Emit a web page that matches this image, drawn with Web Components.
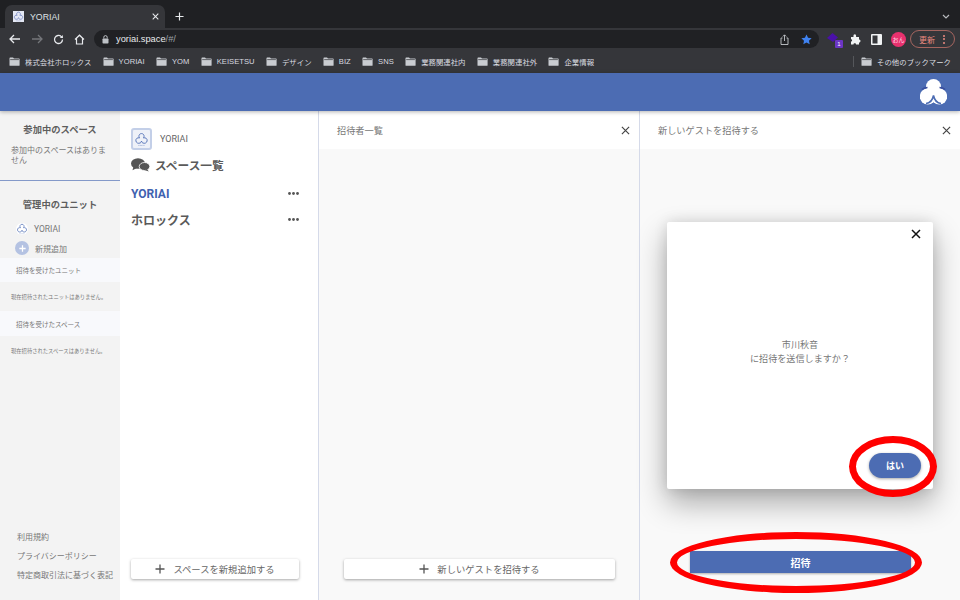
<!DOCTYPE html>
<html lang="ja"><head><meta charset="utf-8"><title>YORIAI</title>
<style>
html,body{margin:0;padding:0;width:960px;height:600px;overflow:hidden;background:#fff;font-family:"Noto Sans CJK JP","Noto Sans",sans-serif}
app-shell{display:flex;flex-direction:column;width:960px;height:600px;position:relative;overflow:hidden}
</style></head><body>
<app-shell>
  <tab-strip></tab-strip>
  <tool-bar></tool-bar>
  <book-marks></book-marks>
  <app-header></app-header>
  <main-area>
    <side-bar></side-bar>
    <space-list></space-list>
    <guest-panel title-text="招待者一覧" width="321" action="新しいゲストを招待する"></guest-panel>
    <invite-panel></invite-panel>
  </main-area>
  <red-ring style="left:849px;top:436px;width:88px;height:61px"></red-ring>
  <red-ring style="left:670px;top:532px;width:252px;height:61px"></red-ring>
</app-shell>
<script>
const sans='"Liberation Sans","Noto Sans CJK JP",sans-serif';
const ui='Roboto,"Noto Sans CJK JP",sans-serif';
const def=(name,html)=>{
  customElements.define(name,class extends HTMLElement{
    constructor(){super();this.attachShadow({mode:'open'});}
    connectedCallback(){this.shadowRoot.innerHTML=typeof html==='function'?html(this):html;}
  });
};
const mark=(s,c='#4c6cb3')=>`<svg width="${s}" height="${s}" viewBox="0 0 24 24" fill="none" stroke="${c}" stroke-width="1.4"><path d="M9 9.5C6.5 6.500 8.500 2.500 12 2.500s5.500 4 3 7c3.500-1.200 6.500 1.300 6 4.700-.5 3.300-4 4.800-7 3.300-1-.5-1.600-1.500-2-3-.4 1.500-1 2.500-2 3-3 1.500-6.500 0-7-3.300C2.500 10.800 5.500 8.300 9 9.500z"/><path d="M7 21.500h10" stroke-width="1" stroke-dasharray="1.500 .8" opacity=".7"/></svg>`;
const x=(s,c,w=1.4)=>`<svg width="${s}" height="${s}" viewBox="0 0 10 10" stroke="${c}" stroke-width="${w}" fill="none"><path d="M1 1l8 8M9 1l-8 8"/></svg>`;
const plus=(s,c,w=1.4)=>`<svg width="${s}" height="${s}" viewBox="0 0 10 10" stroke="${c}" stroke-width="${w}" fill="none"><path d="M5 .5v9M.5 5h9"/></svg>`;

def('tab-strip',`<style>
:host{display:flex;height:28px;flex:none;background:#1f2023;padding:5px 0 0 5px;box-sizing:border-box;align-items:flex-start;font-family:${sans};color:#dfe1e5}
.tab{width:160px;height:23px;background:#35363a;border-radius:7px 7px 0 0;display:flex;align-items:center;padding:0 6px 0 8px;box-sizing:border-box;font-size:8.8px;gap:6px}
.fav{width:11px;height:11px;background:#e4e8f4;display:flex;align-items:center;justify-content:center}
.t{flex:1}
.p{margin:7px 0 0 10px;display:flex}
.c{margin:9px 10px 0 auto;display:flex}
</style><div class="tab"><span class="fav">${mark(11,'#5a6fb5')}</span><span class="t">YORIAI</span>${x(7,'#e8eaed',1.5)}</div>
<span class="p">${plus(9,'#e8eaed',1.3)}</span>
<span class="c"><svg width="8" height="5" viewBox="0 0 8 5" fill="none" stroke="#b8babe" stroke-width="1.2"><path d="M1 1l3 3 3-3"/></svg></span>`);

def('tool-bar',`<style>
:host{display:flex;height:22px;flex:none;background:#35363a;align-items:center;font-family:${sans};color:#e8eaed;box-sizing:border-box}
.nav{display:flex;width:94px;flex:none;position:relative;height:22px}
.nav svg{position:absolute;top:6px}
.omni{width:725px;height:18px;flex:none;background:#202124;border-radius:9px;display:flex;align-items:center;box-sizing:border-box;padding:0 7px 0 8px;font-size:9.3px}
.omni b{font-weight:400;color:#9aa0a6}
.lock{margin-right:7px;display:flex}
.sp{flex:1}
.ext{position:relative;width:15px;height:14px;margin-left:8px;flex:none}
.ext i{position:absolute;left:8px;top:8px;width:8px;height:8px;background:#6b35c4;color:#fff;font:normal 6px/8px ${sans};text-align:center;border-radius:1px}
.pz{margin-left:8px;display:flex}
.pn{margin-left:10px;display:flex}
.av{width:15px;height:15px;border-radius:50%;background:#e8316e;color:#ffd9e5;font-size:6px;display:flex;align-items:center;justify-content:center;margin-left:9px;font-family:"Noto Sans CJK JP"}
.up{margin-left:4px;width:45px;height:18px;border:1px solid #a5655f;border-radius:9px;box-sizing:border-box;color:#ec8b80;font-size:8px;display:flex;align-items:center;padding-left:8px;font-family:"Noto Sans CJK JP";gap:8px}
.dots{display:flex;flex-direction:column;gap:1.5px}
.dots u{display:block;width:2px;height:2px;border-radius:50%;background:#ec8b80}
</style>
<div class="nav">
<svg style="left:9px" width="12" height="10" viewBox="0 0 12 10" fill="none" stroke="#e8eaed" stroke-width="1.3"><path d="M11 5H1.500M5 1L1 5l4 4"/></svg>
<svg style="left:31px" width="12" height="10" viewBox="0 0 12 10" fill="none" stroke="#74767a" stroke-width="1.3"><path d="M1 5h9.500M7 1l4 4-4 4"/></svg>
<svg style="left:53px;top:5.5px" width="11" height="11" viewBox="0 0 11 11" fill="none" stroke="#e8eaed" stroke-width="1.3"><path d="M9.500 5.500a4 4 0 1 1-1.200-2.900L9.500 3.800"/><path d="M9.800 1v3H6.800" fill="#e8eaed" stroke="none"/></svg>
<svg style="left:74px;top:5.5px" width="11" height="11" viewBox="0 0 11 11" fill="none" stroke="#e8eaed" stroke-width="1.2"><path d="M1 5.500L5.500 1.200 10 5.500M2.500 4.500V10h6V4.500"/></svg>
</div>
<div class="omni"><span class="lock"><svg width="7" height="9" viewBox="0 0 7 9" fill="#bdc1c6"><rect x=".5" y="3.500" width="6" height="5" rx=".8"/><path d="M1.800 3.500V2.300a1.700 1.700 0 0 1 3.400 0V3.500" fill="none" stroke="#bdc1c6"/></svg></span><span>yoriai.space<b>/#/</b></span><span class="sp"></span>
<svg width="9" height="11" viewBox="0 0 9 11" fill="none" stroke="#c4c7cc" stroke-width=".9" style="margin-right:12px"><path d="M2.500 4H1v6.500h7V4H6.500M4.500 7V1M2.800 2.500L4.500 .8l1.700 1.700"/></svg>
<svg width="11" height="11" viewBox="0 0 24 24" fill="#3f82f0"><path d="M12 1l3.400 7.300 7.800.9-5.800 5.400 1.600 7.900L12 18.500l-7 4 1.600-7.900L.8 9.200l7.800-.9z"/></svg></div>
<div class="ext"><svg width="11" height="10" viewBox="0 0 11 10" fill="#4a10a8" style="position:absolute;left:0;top:1px"><path d="M5.500 0L11 4.500 6 9 0 5z"/></svg><i>1</i></div>
<span class="pz"><svg width="11" height="11" viewBox="0 0 11 11" fill="#f1f3f4"><path d="M1 3h2.500C3.200 1 4 .3 4.800.3S6.400 1 6.100 3H9v2.500c2-.3 2 3.200 0 3V10.500H6c.3-1.800-2.800-1.800-2.500 0H1V7.500c1.500.2 1.500-2.500 0-2.300z"/></svg></span>
<span class="pn"><svg width="11" height="11" viewBox="0 0 11 11"><rect width="11" height="11" rx="1" fill="#f1f3f4"/><rect x="1.500" y="1.500" width="5" height="8" fill="#35363a"/></svg></span>
<span class="av">おん</span>
<span class="up">更新<span class="dots"><u></u><u></u><u></u></span></span>`);

const folder=`<svg width="11" height="9" viewBox="0 0 11 9" fill="#c9ccd1" style="flex:none"><path d="M.5 1.200C.5.700.8.500 1.200.500H4L5 1.500h5c.4 0 .6.300.6.700v6c0 .4-.3.600-.6.600H1.100c-.4 0-.6-.3-.6-.6z"/><path d="M1.200 2.600h8.700" stroke="#35363a" stroke-width=".7"/></svg>`;
const bm=t=>`<span class="b">${folder}<span>${t}</span></span>`;
def('book-marks',`<style>
:host{display:flex;height:23px;flex:none;background:#35363a;align-items:center;padding:0 9px;box-sizing:border-box;font:7.4px ${sans};color:#dadce0;gap:11.3px;white-space:nowrap}
.b{display:flex;align-items:center;gap:5px}
.l{font-size:7.6px;letter-spacing:.05px}
.sep{width:1px;height:11px;background:#55575b;margin-left:auto;margin-right:-4px}
</style>${['株式会社ホロックス','<span class="l">YORIAI</span>','<span class="l">YOM</span>','<span class="l">KEISETSU</span>','デザイン','<span class="l">BIZ</span>','<span class="l">SNS</span>','業務関連社内','業務関連社外','企業情報'].map(bm).join('')}<span class="sep"></span>${bm('その他のブックマーク')}`);

def('app-header',`<style>
:host{display:flex;height:38px;flex:none;background:#4c6cb3;align-items:center;justify-content:flex-end;padding-right:13px;box-shadow:0 1px 4px rgba(0,0,0,.3);position:relative;z-index:2}
svg{display:block}
</style><svg width="27" height="27" viewBox="0 0 27 27"><g fill="#fff"><circle cx="13.500" cy="7.500" r="7.500"/><circle cx="7.800" cy="17.500" r="8"/><circle cx="19.200" cy="17.500" r="8"/><rect x="8" y="9" width="11" height="11"/></g><g fill="none" stroke="#3a4f9e" stroke-width="1.600"><path d="M6 24.500C10 24 12.500 21.500 13.500 16.500 14.500 21.500 17 24 21 24.500" stroke="#4c6cb3"/><path d="M1.800 10.500C3.500 9 5 8.500 7.500 8.500M25.200 10.500C23.500 9 22 8.500 19.500 8.500"/></g></svg>`);

customElements.define('main-area',class extends HTMLElement{constructor(){super();this.attachShadow({mode:'open'}).innerHTML=`<style>:host{display:flex;flex:1;min-height:0}</style><slot></slot>`}});

def('side-bar',`<style>
:host{display:flex;flex-direction:column;width:120px;flex:none;background:#f3f3f3;font-size:8px;color:#777;box-sizing:border-box}
h3{margin:0;font-size:9.3px;font-weight:700;color:#5e5e5e;text-align:center;line-height:14px}
.top{height:70px;box-sizing:border-box;padding-top:11px;border-bottom:1.5px solid #8499c9}
.top p{margin:9px 8px 0 11px;line-height:10px}
.mid{padding-top:16px}
.row{display:flex;align-items:center;height:18px;padding-left:16px;gap:6px}
.row.a{margin-top:9px;margin-bottom:1px}
.row.a svg{background:#fff;border-radius:50%}
.row .c{width:14px;height:14px;border-radius:50%;background:#b4c2e2;display:flex;align-items:center;justify-content:center;margin-left:-1px}
.row.a span{font:8.5px ${ui}}
.band{height:25px;background:#f8f9fc;display:flex;align-items:center;padding-left:16px;font-size:6.5px}
.band.first{height:24px;margin-top:1px}
.note{height:29px;display:flex;align-items:center;padding-left:11px;font-size:5.3px;white-space:nowrap}
.foot{margin-top:auto;padding:0 0 19px 17px;display:flex;flex-direction:column;gap:7px;line-height:12px}
</style>
<div class="top"><h3>参加中のスペース</h3><p>参加中のスペースはありません</p></div>
<div class="mid"><h3>管理中のユニット</h3>
<div class="row a">${mark(12)}<span>YORIAI</span></div>
<div class="row"><span class="c">${plus(7,'#fff',1.8)}</span><span>新規追加</span></div>
<div class="band first">招待を受けたユニット</div><div class="note">現在招待されたユニットはありません。</div>
<div class="band">招待を受けたスペース</div><div class="note">現在招待されたスペースはありません。</div></div>
<div class="foot"><span>利用規約</span><span>プライバシーポリシー</span><span>特定商取引法に基づく表記</span></div>`);

const dots=`<svg width="11" height="3" viewBox="0 0 11 3" fill="#555"><circle cx="1.500" cy="1.500" r="1.400"/><circle cx="5.500" cy="1.500" r="1.400"/><circle cx="9.500" cy="1.500" r="1.400"/></svg>`;
def('action-button',`<style>
:host{display:flex;align-items:center;justify-content:center;height:20px;background:#fff;border-radius:2px;box-shadow:0 1px 3px rgba(0,0,0,.35);font-size:9.3px;color:#666;gap:8px}
</style>${plus(10,'#555',1.3)}<span><slot></slot></span>`);

def('space-list',`<style>
:host{display:flex;flex-direction:column;width:199px;flex:none;box-sizing:border-box;background:#fff;border-right:1.5px solid #d5dae9;padding:17px 19px 21px 11px;color:#5a5a5a}
.brand{display:flex;align-items:center;gap:8px;font:9px ${ui};color:#666}
.lg{width:21px;height:22px;box-sizing:border-box;background:#eef1f8;border:2px solid #c3cfe8;border-radius:3px;display:flex;align-items:center;justify-content:center}
h2{margin:5px 0 0;font-size:11.7px;line-height:20px;font-weight:700;display:flex;align-items:center;gap:5px}
.it{display:flex;align-items:center;justify-content:space-between;font-size:12px;font-weight:700;height:27px}
.it.on{color:#3f62b0;font-family:${ui};margin-top:5px}
.it.two{margin-top:-1px}
.sp{flex:1}
</style>
<div class="brand"><span class="lg">${mark(15)}</span>YORIAI</div>
<h2><svg width="19" height="14" viewBox="0 0 19 14" fill="#555"><ellipse cx="7" cy="5.500" rx="7" ry="5.300"/><path d="M2.500 8.500L1.500 12.300 6 10z"/><ellipse cx="13.500" cy="8.500" rx="5.300" ry="4" stroke="#fff" stroke-width=".8"/><path d="M16 11l1.800 2.500-4.500-1.500z"/></svg>スペース一覧</h2>
<div class="it on">YORIAI${dots}</div>
<div class="it two">ホロックス${dots}</div>
<span class="sp"></span>
<action-button>スペースを新規追加する</action-button>`);

def('panel-head',e=>`<style>
:host{display:flex;align-items:center;justify-content:space-between;height:38px;flex:none;background:#fff;font-size:9.2px;color:#777;padding:0 9px 0 18px;box-sizing:border-box}
</style><span>${e.getAttribute('t')||''}</span>${x(9,'#444',1.3)}`);

def('guest-panel',e=>`<style>
:host{display:flex;flex-direction:column;width:${e.getAttribute('width')}px;flex:none;box-sizing:border-box;background:#f9f9f9;border-right:1.5px solid #d5dae9}
.sp{flex:1}
action-button{margin:0 24px 21px 25px}
</style><panel-head t="${e.getAttribute('title-text')}"></panel-head><span class="sp"></span><action-button>${e.getAttribute('action')}</action-button>`);

def('confirm-modal',`<style>
:host{position:absolute;left:27px;top:111px;width:266px;height:267px;background:#fff;border-radius:2px;box-shadow:0 14px 30px rgba(0,0,0,.32),0 0 14px rgba(0,0,0,.12);display:flex;flex-direction:column;box-sizing:border-box;font-size:9.1px;color:#777}
.x{position:absolute;right:12px;top:7px;display:flex}
.m{flex:1;display:flex;align-items:center;justify-content:center;text-align:center;line-height:13.2px;padding-bottom:8px}
.yes{position:absolute;left:202px;top:231px;width:52px;height:25px;border-radius:13px;background:#4c6cb3;color:#fff;font-weight:700;font-size:9px;display:flex;align-items:center;justify-content:center;box-shadow:0 1px 3px rgba(0,0,0,.35)}
</style><span class="x">${x(10,'#111',1.5)}</span><div class="m">市川秋音<br>に招待を送信しますか？</div><div class="yes">はい</div>`);

def('invite-panel',`<style>
:host{display:flex;flex-direction:column;flex:1;background:#f9f9f9;position:relative;min-width:0}
.sp{flex:1}
.b{height:22px;margin:0 49px 27px 50px;background:#4c6cb3;color:#fff;font-weight:700;font-size:10px;display:flex;align-items:center;justify-content:center;box-shadow:0 1px 2px rgba(0,0,0,.3)}
</style><panel-head t="新しいゲストを招待する"></panel-head><span class="sp"></span><div class="b">招待</div><confirm-modal></confirm-modal>`);

def('red-ring',`<style>
:host{position:absolute;display:block;box-sizing:border-box;border:7px solid #f00;border-radius:50%;z-index:5;pointer-events:none}
</style>`);
</script>
</body></html>
